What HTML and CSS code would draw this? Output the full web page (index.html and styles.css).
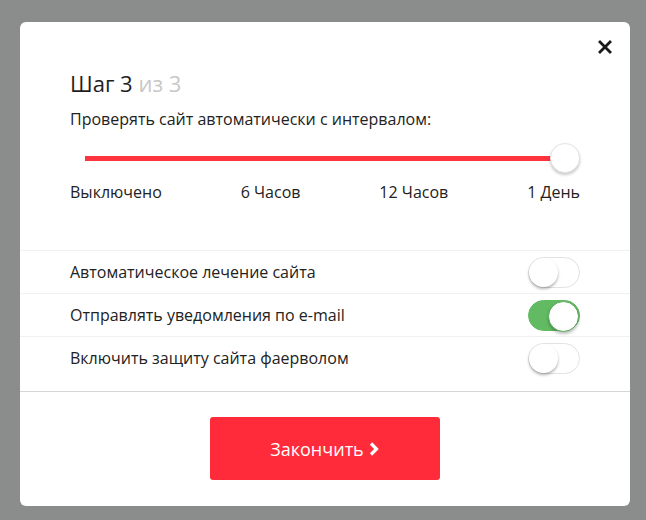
FILE: index.html
```
<!DOCTYPE html>
<html lang="ru">
<head>
<meta charset="utf-8">
<link rel="stylesheet" href="styles.css">
</head>
<body>
<div class="modal">
  <button class="close" aria-label="Закрыть">
    <svg width="14" height="14" viewBox="0 0 14 14"><path d="M2 2 L12 12 M12 2 L2 12" stroke="#1a1a1a" stroke-width="2.8" stroke-linecap="square"/></svg>
  </button>
  <div class="top">
    <h2 class="title">Шаг 3 <span class="muted">из 3</span></h2>
    <p class="subtitle">Проверять сайт автоматически с интервалом:</p>
    <div class="slider">
      <div class="track"></div>
      <div class="thumb"></div>
    </div>
    <div class="labels">
      <span>Выключено</span>
      <span>6 Часов</span>
      <span>12 Часов</span>
      <span>1 День</span>
    </div>
  </div>
  <div class="options">
    <div class="row"><span>Автоматическое лечение сайта</span><span class="toggle"></span></div>
    <div class="row"><span>Отправлять уведомления по e-mail</span><span class="toggle on"></span></div>
    <div class="row"><span>Включить защиту сайта фаерволом</span><span class="toggle"></span></div>
  </div>
  <div class="footer">
    <button class="finish">Закончить <svg width="12" height="14" viewBox="0 0 12 14"><path d="M3 1.5 L8.5 7 L3 12.5" fill="none" stroke="#fff" stroke-width="3.2"/></svg></button>
  </div>
</div>
</body>
</html>
```
FILE: styles.css
```
* { box-sizing: border-box; }
html, body { margin: 0; padding: 0; }
body {
  background: #8b8d8d;
  font-family: "Open Sans", "Liberation Sans", sans-serif;
  color: #222;
  width: 646px;
  height: 520px;
  overflow: hidden;
}
.modal {
  position: relative;
  margin: 22px 0 0 20px;
  width: 610px;
  height: 484px;
  background: #fff;
  border-radius: 6px;
}
.close {
  position: absolute;
  top: 18px;
  right: 18px;
  width: 14px;
  height: 14px;
  padding: 0;
  border: 0;
  background: none;
  display: block;
}
.close svg { display: block; }
.top { padding: 47px 50px 0; }
.title {
  margin: 0;
  font-size: 22px;
  line-height: 28px;
  font-weight: 400;
  color: #1e1e1e;
}
.muted { color: #c8c8c8; }
.subtitle {
  margin: 11px 0 0;
  font-size: 16px;
  line-height: 22px;
}
.slider {
  position: relative;
  margin-top: 13px;
  height: 30px;
  display: flex;
  align-items: center;
  padding-left: 15px;
}
.track {
  flex: 1;
  height: 5px;
  background: #fd3440;
  margin-right: 15px;
}
.thumb {
  position: absolute;
  right: 0;
  top: 0;
  width: 30px;
  height: 30px;
  border-radius: 50%;
  background: #fff;
  border: 1px solid #e4e4e4;
  box-shadow: 0 2px 3px rgba(0,0,0,0.22);
}
.labels {
  margin-top: 8px;
  display: flex;
  justify-content: space-between;
  font-size: 16px;
  line-height: 22px;
}
.options {
  margin-top: 47px;
  padding-bottom: 12px;
}
.row {
  height: 43px;
  border-top: 1px solid #f1f1f1;
  padding: 0 50px;
  display: flex;
  align-items: center;
  justify-content: space-between;
  font-size: 16px;
}
.toggle {
  position: relative;
  width: 52px;
  height: 31px;
  border-radius: 16px;
  border: 1px solid #e2e2e2;
  background: #fff;
}
.toggle::after {
  content: "";
  position: absolute;
  top: 0;
  left: 0;
  width: 29px;
  height: 29px;
  border-radius: 50%;
  background: #fff;
  box-shadow: 0 2px 3px rgba(0,0,0,0.3);
}
.toggle.on {
  background: #62bb63;
  border-color: #62bb63;
}
.toggle.on::after {
  left: auto;
  right: 0;
  box-shadow: 0 2px 3px rgba(0,0,0,0.25);
  border: 1px solid #55a957;
}
.footer {
  border-top: 1px solid #d6d6d6;
  display: flex;
  justify-content: center;
  padding-top: 25px;
}
.finish {
  width: 230px;
  height: 63px;
  background: #ff2b3a;
  border: 0;
  border-radius: 3px;
  color: #fff;
  font-family: "Open Sans", "Liberation Sans", sans-serif;
  font-size: 18px;
  display: flex;
  align-items: center;
  justify-content: center;
  gap: 4px;
  padding: 0;
}
.finish svg { display: block; }
```
